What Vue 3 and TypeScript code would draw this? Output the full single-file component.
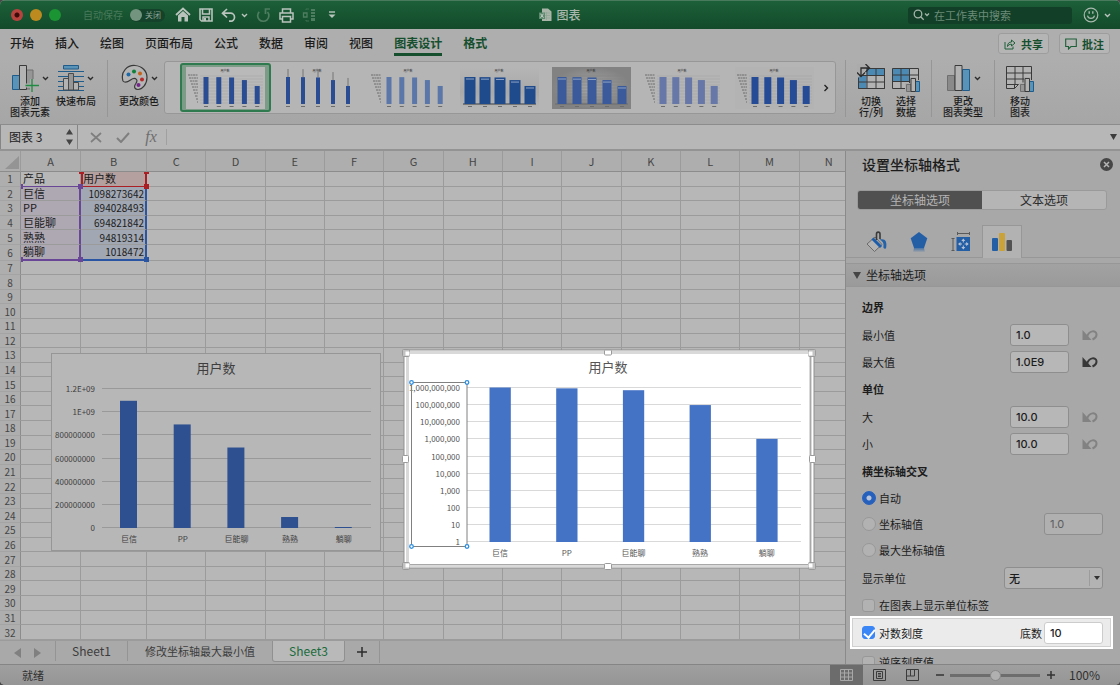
<script setup lang="ts">
import { ref } from 'vue'

interface Handle { pos: string; tone: string }
interface Series { label: string; value: number }
interface ThumbStyle { width: number; fill: string; bg: string; axis: boolean; grid: boolean; whiskers: boolean; caps: boolean }

const series: Series[] = [
  { label: '巨信', value: 1098273642 },
  { label: 'PP', value: 894028493 },
  { label: '巨能聊', value: 694821842 },
  { label: '熟熟', value: 94819314 },
  { label: '躺聊', value: 1018472 },
]

const ribbonTabs = ['开始', '插入', '绘图', '页面布局', '公式', '数据', '审阅', '视图', '图表设计', '格式']
const columns = 'ABCDEFGHIJKLMN'.split('')
const rowCount = 32

function cellText(row: number, col: number): string {
  if (row === 1) return col === 0 ? '产品' : col === 1 ? '用户数' : ''
  const item = series[row - 2]
  if (!item) return ''
  return col === 0 ? item.label : col === 1 ? String(item.value) : ''
}

function cellClass(row: number, col: number): string[] {
  const out: string[] = []
  if (row === 1 && col === 0) out.push('range-head')
  if (row === 1 && col === 1) out.push('range-red')
  if (row > 1 && row < 7 && col === 0) out.push('range-purple')
  if (row > 1 && row < 7 && col === 1) out.push('range-blue')
  if (row === 6 && col < 2) out.push('range-end')
  return out
}

const handles: Record<string, Handle[]> = {
  '1-0': [{ pos: 'bl', tone: 'purple' }],
  '1-1': [
    { pos: 'tl', tone: 'red' },
    { pos: 'tr', tone: 'red' },
    { pos: 'bl', tone: 'purple' },
    { pos: 'br', tone: 'red' },
  ],
  '6-0': [{ pos: 'bl', tone: 'purple' }],
  '6-1': [
    { pos: 'bl', tone: 'purple' },
    { pos: 'br', tone: 'blue' },
  ],
}

const linearTicks = ['1.2E+09', '1E+09', '800000000', '600000000', '400000000', '200000000', '0']
const logTicks = Array.from({ length: 10 }, (_, i) => (10 ** (9 - i)).toLocaleString('en-US'))

const linearHeight = (v: number) => Math.max(1, (v / 1.2e9) * 139)
const logHeight = (v: number, full: number) => (Math.min(Math.log10(v), 9) / 9) * full

const thumbs: ThumbStyle[] = [
  { width: 5, fill: '#2a4c92', bg: '#b9b9b9', axis: true, grid: true, whiskers: false, caps: false },
  { width: 4, fill: '#2a4c92', bg: '#b5b5b5', axis: false, grid: false, whiskers: true, caps: false },
  { width: 5, fill: '#5b76a8', bg: '#b5b5b5', axis: true, grid: false, whiskers: false, caps: false },
  { width: 11, fill: '#1f4a8c', bg: 'url(#shade)', axis: false, grid: false, whiskers: false, caps: true },
  { width: 9, fill: '#3a5a9c', bg: 'url(#metal)', axis: false, grid: true, whiskers: false, caps: true },
  { width: 7, fill: '#6677a8', bg: '#b5b5b5', axis: true, grid: true, whiskers: false, caps: false },
  { width: 7, fill: '#264b96', bg: '#b3b3b3', axis: true, grid: true, whiskers: false, caps: false },
]

function thumbX(t: ThumbStyle, i: number): number {
  return t.axis ? 20 + i * 12.8 : 10 + i * 15
}

const minValue = ref('1.0')
const maxValue = ref('1.0E9')
const major = ref('10.0')
const minor = ref('10.0')
const crossing = ref('auto')
const crossValue = ref('1.0')
const displayUnit = ref('none')
const showUnitLabel = ref(false)
const logScale = ref(true)
const logBase = ref('10')
const reversed = ref(false)
const zoomLevel = ref(50)
const autosave = ref(false)
const search = ref('')
const formula = ref('')
const nameBox = ref('图表 3')
</script>

<template>
  <div class="window">
    <header class="titlebar">
      <div class="title-left">
        <div class="lights">
          <button class="light red" aria-label="关闭窗口"></button>
          <button class="light amber" aria-label="最小化"></button>
          <button class="light green" aria-label="缩放"></button>
        </div>
        <label class="autosave">
          <span>自动保存</span>
          <input v-model="autosave" type="checkbox" />
          <span class="switch"><i></i>关闭</span>
        </label>
        <div class="quick">
          <button aria-label="主页">
            <svg width="16" height="16" viewBox="0 0 16 16"><path d="M1 8 8 1.5 15 8" fill="none" stroke="#b9c4bd" stroke-width="1.8" /><path d="M3 8.500 8 4l5 4.500V14.500H9.500V10h-3v4.500H3z" fill="#b9c4bd" /></svg>
          </button>
          <button aria-label="保存">
            <svg width="14" height="14" viewBox="0 0 14 14"><path d="M1 1h12v12H2.500L1 11.500z" fill="none" stroke="#b9c4bd" stroke-width="1.600" /><path d="M3.500 1v5h7V1M4 13V9h6v4" fill="none" stroke="#b9c4bd" stroke-width="1.500" /><path d="M5 10h2v3H5z" fill="#b9c4bd" /></svg>
          </button>
          <button class="pair" aria-label="撤销">
            <svg width="15" height="14" viewBox="0 0 15 14"><path d="M6 1 1.500 5.200 6 9.500M2 5.200h7.500a4 4 0 0 1 0 8H8" fill="none" stroke="#b9c4bd" stroke-width="1.700" /></svg>
            <svg width="7" height="5" viewBox="0 0 7 5"><path d="m1 1 2.500 2.500L6 1" fill="none" stroke="#b9c4bd" stroke-width="1.400" /></svg>
          </button>
          <button aria-label="恢复">
            <svg width="15" height="15" viewBox="0 0 15 15"><path d="M3.200 3.800A5.600 5.600 0 1 0 11.500 4" fill="none" stroke="#4f7d60" stroke-width="1.700" /><path d="M14 1H9.500v5" fill="none" stroke="#4f7d60" stroke-width="1.700" /></svg>
          </button>
          <button aria-label="打印">
            <svg width="15" height="15" viewBox="0 0 15 15"><path d="M3.500 5V1h8v4M3.500 11H1V5h13v6h-2.500M3.500 8.500h8V14h-8z" fill="none" stroke="#b9c4bd" stroke-width="1.500" /></svg>
          </button>
          <button aria-label="移动控件">
            <svg width="14" height="14" viewBox="0 0 14 14"><path d="M1.500 5h3.500v4H1.500z" fill="none" stroke="#4f7d60" stroke-width="1.300" /><path d="M4 2V1h3M4 12v1h3" fill="none" stroke="#3f7052" /><path d="M9 1h4v2H9zM9 4h4v2H9zM9 7h4v2H9zM9 10h4v3H9z" fill="#4f7d60" /></svg>
          </button>
          <button class="customize" aria-label="自定义工具栏">
            <svg width="8" height="8" viewBox="0 0 8 8"><path d="M1 1h6" stroke="#b9c4bd" stroke-width="1.400" /><path d="M.5 3.500h7L4 7z" fill="#b9c4bd" /></svg>
          </button>
        </div>
      </div>
      <h1 class="doc-title">
        <svg width="13" height="14" viewBox="0 0 13 14"><path d="M3 .5h6l3.500 3V13H3z" fill="#a9b5a9" /><path d="M5 5h6M5 7.500h6M5 10h6M7.500 4v8" stroke="#8ea392" stroke-width=".7" /><path d="M0 4.500h6v6.500H0z" fill="#5c8a6e" /><path d="m1.500 5.700 3 4M4.500 5.700l-3 4" stroke="#c5cec6" /></svg>
        图表
      </h1>
      <div class="title-right">
        <label class="search">
          <svg width="18" height="12" viewBox="0 0 18 12"><circle cx="5" cy="5" r="3.800" fill="none" stroke="#a3b5a9" stroke-width="1.300" /><path d="m7.700 7.700 3 3M12 4.500l2 2 2-2" fill="none" stroke="#a3b5a9" stroke-width="1.300" /></svg>
          <input v-model="search" type="text" placeholder="在工作表中搜索" aria-label="在工作表中搜索" />
        </label>
        <button class="smile" aria-label="反馈">
          <svg width="16" height="16" viewBox="0 0 16 16"><circle cx="8" cy="8" r="6.800" fill="none" stroke="#a9b8ae" stroke-width="1.200" /><path d="M4.500 8.700a3.600 3.600 0 0 0 7 0" fill="none" stroke="#a9b8ae" stroke-width="1.200" /><path d="M6.200 4.300v2.500M9.800 4.300v2.500" stroke="#a9b8ae" stroke-width="1.400" /></svg>
          <svg width="7" height="5" viewBox="0 0 7 5"><path d="m1 1 2.500 2.500L6 1" fill="none" stroke="#b9c4bd" stroke-width="1.400" /></svg>
        </button>
      </div>
    </header>

    <nav class="tabs">
      <button v-for="tab in ribbonTabs" :key="tab" :class="{ active: tab === '图表设计', context: tab === '格式' }">{{ tab }}</button>
      <div class="share">
        <button>
          <svg width="12" height="12" viewBox="0 0 12 12"><path d="M1 4v7h8V8.500" fill="none" stroke="#1d5f38" /><path d="M3.500 8.500c0-3 1.500-4.500 4-4.500V2L11 5 7.500 8V6.200c-2 0-3 .6-4 2.300z" fill="none" stroke="#1d5f38" /></svg>
          共享
        </button>
        <button>
          <svg width="12" height="12" viewBox="0 0 12 12"><path d="M.7 1h10.600v7.500H6L3.500 11V8.500H.7z" fill="none" stroke="#1d5f38" stroke-width="1.100" /></svg>
          批注
        </button>
      </div>
    </nav>

    <section class="ribbon">
      <button class="tool">
        <span class="pic">
          <svg width="28" height="28" viewBox="0 0 28 28"><path d="M15 6h7v19h-7z" fill="#969696" stroke="#6f6f6f" /><path d="M1.500 11.500h7v14h-7z" fill="#5a93b8" stroke="#1f5c8c" /><path d="M8.500 1.500h7v24h-7z" fill="#b3b3b3" stroke="#3a3a3a" /><path d="M21 15v13M14.500 21.500H28" stroke="#ababab" stroke-width="4" /><path d="M21 15v13M14.500 21.500H28" stroke="#218a43" stroke-width="1.300" /></svg>
          <svg class="chev" width="7" height="5" viewBox="0 0 7 5"><path d="m1 1 2.500 2.500L6 1" fill="none" stroke="#2c2c2c" stroke-width="1.400" /></svg>
        </span>
        <span>添加<br />图表元素</span>
      </button>
      <button class="tool second">
        <span class="pic">
          <svg width="26" height="28" viewBox="0 0 26 28"><path d="M5.500 1.500h15v3.500h-15z" fill="#5a93b8" stroke="#1f5c8c" /><path d="M0 7.500h26M0 12.500h26M0 17.500h26M0 22.500h26M0 26.500h26" stroke="#1f5c8c" stroke-width="1.200" /><path d="M5.500 14.500h5.500V26H5.500zM15.500 18.500h5V26h-5z" fill="#b3b3b3" stroke="#4a4a4a" /><path d="M10.500 9.500h5V26h-5z" fill="#969696" stroke="#4a4a4a" /></svg>
          <svg class="chev" width="7" height="5" viewBox="0 0 7 5"><path d="m1 1 2.500 2.500L6 1" fill="none" stroke="#2c2c2c" stroke-width="1.400" /></svg>
        </span>
        <span>快速布局</span>
      </button>
      <i class="sep"></i>
      <button class="tool">
        <span class="pic">
          <svg width="27" height="28" viewBox="0 0 27 28"><path d="M2 17C-1 7 7 1 14 1.500c7 .5 12 5.500 12 12 0 7-5 12-9 12-3 0-4-2-3-4.500 1-2 3-3.500 1.500-5.500-2-2.500-4-1-6 .5S4 19.500 2 17z" fill="#b5b5b5" stroke="#3a3a3a" stroke-width="1.200" /><circle cx="7.500" cy="10.500" r="2" fill="#1c6aa8" /><circle cx="13" cy="7.500" r="2" fill="#11803a" /><circle cx="19" cy="9.500" r="2" fill="#c4641c" /><circle cx="21" cy="15.500" r="2" fill="#b82a2a" /><circle cx="17.500" cy="21" r="2" fill="#74268c" /></svg>
          <svg class="chev" width="7" height="5" viewBox="0 0 7 5"><path d="m1 1 2.500 2.500L6 1" fill="none" stroke="#2c2c2c" stroke-width="1.400" /></svg>
        </span>
        <span>更改颜色</span>
      </button>
      <div class="gallery">
        <button v-for="(t, n) in thumbs" :key="n" class="thumb" :class="{ selected: n === 0 }" :aria-label="'样式 ' + (n + 1)">
          <svg width="79" height="42" viewBox="0 0 79 42">
            <defs>
              <linearGradient id="shade" x1="0" y1="0" x2="0" y2="1"><stop offset="0" stop-color="#b5b5b5" /><stop offset=".6" stop-color="#a9a9a9" /><stop offset="1" stop-color="#b5b5b5" /></linearGradient>
              <radialGradient id="metal"><stop offset="0" stop-color="#a6a6a6" /><stop offset="1" stop-color="#828282" /></radialGradient>
            </defs>
            <rect width="79" height="42" :fill="t.bg" />
            <template v-if="t.grid"><path v-for="g in 10" :key="g" :d="`M${t.axis ? 14 : 3} ${6 + g * 3}H77`" :stroke="n === 4 ? '#858585' : '#a6a6a6'" stroke-width=".6" /></template>
            <template v-if="t.axis"><path v-for="g in 10" :key="g" :d="`M${1 + g} ${5 + g * 3}H12`" stroke="#6c6c6c" stroke-width="1" stroke-dasharray="2 .5" /></template>
            <path v-if="n === 3 || n === 4" d="M3 37h73" stroke="#777" stroke-width="2" />
            <g v-for="(s, i) in series" :key="i">
              <path v-if="t.whiskers" :d="`M${thumbX(t, i)} ${29 - logHeight(s.value, 27)}v8`" stroke="#666" stroke-width=".8" />
              <rect :x="thumbX(t, i) - t.width / 2" :y="37 - logHeight(s.value, 27)" :width="t.width" :height="logHeight(s.value, 27)" :fill="t.fill" />
              <path v-if="t.caps" :d="`M${thumbX(t, i) - 4} ${39 - logHeight(s.value, 27)}h8`" stroke="#8fa3c4" stroke-width="1" />
              <path :d="`M${thumbX(t, i) - 2} 39.500h4`" stroke="#6c6c6c" stroke-width="1" />
            </g>
            <text x="39" y="5" text-anchor="middle" font-size="3" fill="#333">用户数</text>
          </svg>
        </button>
        <button class="more" aria-label="更多样式">
          <svg width="6" height="8" viewBox="0 0 6 8"><path d="m1.500 1 3 3-3 3" fill="none" stroke="#222" stroke-width="1.400" /></svg>
        </button>
      </div>
      <i class="sep"></i>
      <button class="tool narrow">
        <span class="pic">
          <svg width="28" height="28" viewBox="0 0 28 28"><path d="M1.500 4.500h26v20h-26z" fill="#b3b3b3" stroke="#3a3a3a" /><path d="M9.500 4.500h18v7H9.500zM1.500 11.500h8v13h-8z" fill="#4d8ab3" /><path d="M1.500 11.500h26M1.500 18h26M10 4.500v20M19 4.500v20M1.500 4.500h26v20h-26z" fill="none" stroke="#3a3a3a" /><path d="M-1-1h15L1 14h-3z" fill="#ababab" /><path d="M4 12V4h8M8.500 0 12.500 4l-4 4M0 8.500l4 4 4-4" fill="none" stroke="#2c2c2c" stroke-width="1.300" /></svg>
        </span>
        <span>切换<br />行/列</span>
      </button>
      <button class="tool narrow third">
        <span class="pic">
          <svg width="28" height="28" viewBox="0 0 28 28"><path d="M.5 4.500h26v20H.500z" fill="#b3b3b3" /><path d="M.5 4.500H18v13H.500z" fill="#4d8ab3" /><path d="M.5 4.500h26v20H.500zM.5 11h26M.5 17.500h26M9 4.500v20M17.500 4.500v20" fill="none" stroke="#3a3a3a" /><path d="M13 19h5v-6h7v3h3v12H13z" fill="#ababab" /><path d="M14.500 20.500h4.500v7h-4.500z" fill="#969696" stroke="#6f6f6f" /><path d="M23.500 17.500h4v10h-4z" fill="#5a93b8" stroke="#1f5c8c" /><path d="M19 14.500h4.500v13H19z" fill="#b3b3b3" stroke="#3a3a3a" /></svg>
        </span>
        <span>选择<br />数据</span>
      </button>
      <i class="sep"></i>
      <button class="tool">
        <span class="pic">
          <svg width="25" height="28" viewBox="0 0 25 28"><path d="M1.500 11.500h7v15h-7z" fill="#8a8a8a" stroke="#6f6f6f" /><path d="M16.500 5.500h7v21h-7z" fill="#5a93b8" stroke="#1f5c8c" /><path d="M9 1.500h7v25H9z" fill="#b3b3b3" stroke="#3a3a3a" /></svg>
          <svg class="chev" width="7" height="5" viewBox="0 0 7 5"><path d="m1 1 2.500 2.500L6 1" fill="none" stroke="#2c2c2c" stroke-width="1.400" /></svg>
        </span>
        <span>更改<br />图表类型</span>
      </button>
      <i class="sep"></i>
      <button class="tool narrow last">
        <span class="pic">
          <svg width="28" height="28" viewBox="0 0 28 28"><path d="M.5 2.500h25v20H12l-4 2H.500z" fill="#b3b3b3" /><path d="M25.500 16V2.500H.500v22h8l4-4H.500M.500 9h25M.500 15h25M9 2.500v18M17 2.500v16M8.500 24.500v-4" fill="none" stroke="#3a3a3a" /><path d="M13 19h5v-6h7v3h3v12H13z" fill="#ababab" /><path d="M14.500 20.500h4.500v7h-4.500z" fill="#969696" stroke="#6f6f6f" /><path d="M23.500 17.500h4v10h-4z" fill="#5a93b8" stroke="#1f5c8c" /><path d="M19 14.500h4.500v13H19z" fill="#b3b3b3" stroke="#3a3a3a" /></svg>
        </span>
        <span>移动<br />图表</span>
      </button>
    </section>

    <section class="formula">
      <div class="namebox">
        <input v-model="nameBox" type="text" aria-label="名称框" />
        <svg width="7" height="16" viewBox="0 0 7 16"><path d="M3.500 0 7 5.500H0zM3.500 16 0 10.500h7z" fill="#444" /></svg>
      </div>
      <button aria-label="取消"><svg width="12" height="11" viewBox="0 0 12 11"><path d="m1 1 10 9M11 1 1 10" stroke="#7f7f7f" stroke-width="1.700" /></svg></button>
      <button aria-label="输入"><svg width="14" height="11" viewBox="0 0 14 11"><path d="m1 6 4 4 8-9" fill="none" stroke="#7f7f7f" stroke-width="2" /></svg></button>
      <button class="fx" aria-label="插入函数">fx</button>
      <input v-model="formula" class="formula-input" type="text" aria-label="编辑栏" />
      <svg class="expand" width="7" height="6" viewBox="0 0 7 6"><path d="M0 0h7L3.500 6z" fill="#3c3c3c" /></svg>
    </section>

    <main class="main">
      <div class="workbook">
        <div class="sheet">
          <table>
            <colgroup>
              <col class="c-row" />
              <col class="c-a" />
              <col class="c-b" />
              <col v-for="n in 12" :key="n" />
            </colgroup>
            <thead>
              <tr>
                <th class="corner"><svg width="14" height="13" viewBox="0 0 14 13"><path d="M14 0v13H0z" fill="#949494" /></svg></th>
                <th v-for="c in columns" :key="c" scope="col">{{ c }}</th>
              </tr>
            </thead>
            <tbody>
              <tr v-for="r in rowCount" :key="r">
                <th scope="row">{{ r }}</th>
                <td v-for="(c, i) in columns" :key="c" :class="cellClass(r, i)">
                  {{ cellText(r, i) }}<i v-for="h in handles[r + '-' + i] || []" :key="h.pos" class="handle" :class="[h.pos, h.tone]"></i>
                </td>
              </tr>
            </tbody>
          </table>

          <svg class="chart linear" width="330" height="198" viewBox="0 0 330 198" role="img" aria-label="用户数">
            <rect x=".5" y=".5" width="329" height="197" fill="#b7b7b7" stroke="#969696" />
            <text x="165" y="20" class="chart-title">用户数</text>
            <g v-for="(t, i) in linearTicks" :key="t">
              <path :d="`M51 ${35.5 + Math.round(i * 23.2)}H320`" stroke="#999" />
              <text x="44" :y="39 + Math.round(i * 23.2)" class="tick">{{ t }}</text>
            </g>
            <g v-for="(s, i) in series" :key="s.label">
              <rect :x="69 + i * 53.7" :y="175 - linearHeight(s.value)" width="17" :height="linearHeight(s.value)" fill="#2e5090" />
              <text :x="78 + i * 53.7" y="189" class="cat">{{ s.label }}</text>
            </g>
          </svg>

          <svg class="chart log" width="412" height="221" viewBox="0 0 412 221" role="img" aria-label="用户数">
            <rect x="1" y="1" width="410" height="218" rx="3" fill="#fff" stroke="#8f8f8f" />
            <rect x="4.500" y="3.500" width="403" height="213" fill="#fff" stroke="#d9d9d9" stroke-width="3" />
            <path d="M5 215.500h402.500V5" fill="none" stroke="#a8a8a8" />
            <g fill="#fff" stroke="#9a9a9a">
              <rect x="-.5" y=".5" width="7" height="7" rx="1" fill="#c2c2c2" />
              <rect x="405.500" y=".5" width="7" height="7" rx="1" fill="#c2c2c2" />
              <rect x="-.5" y="213.500" width="7" height="7" rx="1" fill="#c2c2c2" />
              <rect x="405.500" y="213.500" width="7" height="7" rx="1" fill="#c2c2c2" />
              <rect x="201.500" y="1" width="7" height="5" rx="1" />
              <rect x="201.500" y="214.500" width="7" height="6" rx="1" />
              <rect x="-.5" y="106.500" width="6" height="7" rx="1" />
              <rect x="406.500" y="106.500" width="6" height="7" rx="1" />
            </g>
            <path d="M2.500 2.500h4v4h-4zM405.500 2.500h4v4h-4zM2.500 214.500h4v4h-4zM405.500 214.500h4v4h-4z" fill="#fff" />
            <text x="205" y="23" class="chart-title bright">用户数</text>
            <g v-for="(t, i) in logTicks" :key="t">
              <path :d="`M64 ${38.5 + Math.round(i * 17.15)}H398`" stroke="#d9d9d9" />
              <text x="57" :y="42 + Math.round(i * 17.15)" class="tick bright">{{ t }}</text>
            </g>
            <g v-for="(s, i) in series" :key="s.label">
              <rect :x="86.5 + i * 66.7" :y="193 - logHeight(s.value, 154.5)" width="21.300" :height="logHeight(s.value, 154.5)" fill="#4472c4" />
              <text :x="97 + i * 66.7" y="207" class="cat bright">{{ s.label }}</text>
            </g>
            <path d="M8.500 33.500H64v164H8.500z" fill="none" stroke="#808080" />
            <g fill="#fff" stroke="#2f8fe0" stroke-width="1.300">
              <circle cx="8.500" cy="33.500" r="1.800" /><circle cx="64" cy="33.500" r="1.800" />
              <circle cx="8.500" cy="197.500" r="1.800" /><circle cx="64" cy="197.500" r="1.800" />
            </g>
          </svg>
        </div>

        <div class="sheet-tabs">
          <button class="arrow" aria-label="上一个"><svg width="7" height="10" viewBox="0 0 7 10"><path d="M7 0v10L0 5z" fill="#808080" /></svg></button>
          <button class="arrow" aria-label="下一个"><svg width="7" height="10" viewBox="0 0 7 10"><path d="M0 0v10l7-5z" fill="#808080" /></svg></button>
          <button class="stab first">Sheet1</button>
          <button class="stab wide">修改坐标轴最大最小值</button>
          <button class="stab current">Sheet3</button>
          <button class="add" aria-label="新建工作表"><svg width="10" height="10" viewBox="0 0 10 10"><path d="M5 0v10M0 5h10" stroke="#2c2c2c" stroke-width="1.500" /></svg></button>
        </div>
      </div>

      <aside class="panel">
        <div class="panel-head">
          <h2>设置坐标轴格式</h2>
          <button aria-label="关闭"><svg width="13" height="13" viewBox="0 0 13 13"><circle cx="6.500" cy="6.500" r="6.500" fill="#464646" /><path d="m4 4 5 5M9 4 4 9" stroke="#b5b5b5" stroke-width="1.500" /></svg></button>
        </div>
        <div class="segment">
          <button class="on">坐标轴选项</button>
          <button>文本选项</button>
        </div>
        <div class="kinds">
          <button aria-label="填充与线条">
            <svg width="22" height="22" viewBox="0 0 22 22"><path d="m9 6 7 7.500-7.500 7-7.500-7.500z" fill="#b3b3b3" stroke="#6a6a6a" /><path d="m6.500 7.500 8.500 8.500" stroke="#1c5ca8" stroke-width="3" /><path d="M13.500 8.500c5.500-1.500 8 1.500 6.500 9-2 .5-3-.5-2.500-2.500.5-3-1-5-4-6.500z" fill="#2463a8" /><path d="M10.500 9V3c0-2.500 3.500-2.500 3.500 0v5" fill="none" stroke="#3a3a3a" stroke-width="1.600" /></svg>
          </button>
          <button aria-label="效果">
            <svg width="18" height="22" viewBox="0 0 18 22"><defs><linearGradient id="fade" x1="0" y1="0" x2="0" y2="1"><stop offset="0" stop-color="#245fa6" stop-opacity=".7" /><stop offset="1" stop-color="#245fa6" stop-opacity="0" /></linearGradient></defs><path d="m9 1 8.300 6.300L14 17H4L.700 7.300z" fill="#245fa6" /><path d="M4 17h10l1 4.500H3z" fill="url(#fade)" /></svg>
          </button>
          <button aria-label="大小与属性">
            <svg width="20" height="20" viewBox="0 0 20 20"><path d="M6 1.500h13M6.500 0v3M18.500 0v3M2 6v13M.5 6.500h3M.5 18.500h3" stroke="#5a5a5a" /><path d="M5.500 5H19v14H5.500z" fill="#245fa6" /><path d="m12.300 6.500 2 2.500h-4zM12.300 17.500l2-2.500h-4zM7 12l2.500 2v-4zM17.700 12l-2.500 2v-4z" fill="#b9c4d4" /><path d="M12.300 8v2.500M12.300 13.500V16M8.500 12h2.500M13.700 12h2.500" stroke="#b9c4d4" /></svg>
          </button>
          <button class="on" aria-label="坐标轴选项">
            <svg width="20" height="18" viewBox="0 0 20 18"><rect y="5" width="6" height="13" rx="1" fill="#245fa6" /><rect x="7" width="6" height="18" rx="1" fill="#c9a23a" /><rect x="14.500" y="7" width="5.500" height="11" rx="1" fill="#525252" /></svg>
          </button>
        </div>
        <h3 class="section"><svg width="8" height="7" viewBox="0 0 8 7"><path d="M0 0h8L4 7z" fill="#444" /></svg>坐标轴选项</h3>

        <form class="fields" @submit.prevent>
          <h4>边界</h4>
          <div class="row">
            <label for="f-min">最小值</label><input id="f-min" v-model="minValue" type="text" />
            <button class="reset" type="button" aria-label="重置最小值"><svg width="16" height="12" viewBox="0 0 16 12"><path d="M.5 1v10h9z" /><path d="M5 8c2-7 9-7 9.500-3 .3 3-2 4.500-4 5.500" /></svg></button>
          </div>
          <div class="row">
            <label for="f-max">最大值</label><input id="f-max" v-model="maxValue" type="text" />
            <button class="reset live" type="button" aria-label="重置最大值"><svg width="16" height="12" viewBox="0 0 16 12"><path d="M.5 1v10h9z" /><path d="M5 8c2-7 9-7 9.500-3 .3 3-2 4.500-4 5.500" /></svg></button>
          </div>
          <h4>单位</h4>
          <div class="row">
            <label for="f-major">大</label><input id="f-major" v-model="major" type="text" />
            <button class="reset" type="button" aria-label="重置主要单位"><svg width="16" height="12" viewBox="0 0 16 12"><path d="M.5 1v10h9z" /><path d="M5 8c2-7 9-7 9.500-3 .3 3-2 4.500-4 5.500" /></svg></button>
          </div>
          <div class="row">
            <label for="f-minor">小</label><input id="f-minor" v-model="minor" type="text" />
            <button class="reset" type="button" aria-label="重置次要单位"><svg width="16" height="12" viewBox="0 0 16 12"><path d="M.5 1v10h9z" /><path d="M5 8c2-7 9-7 9.500-3 .3 3-2 4.500-4 5.500" /></svg></button>
          </div>
          <h4>横坐标轴交叉</h4>
          <div class="row opt"><label><input v-model="crossing" type="radio" value="auto" />自动</label></div>
          <div class="row opt">
            <label><input v-model="crossing" type="radio" value="value" />坐标轴值</label>
            <input v-model="crossValue" type="text" disabled aria-label="坐标轴值" />
          </div>
          <div class="row opt"><label><input v-model="crossing" type="radio" value="max" />最大坐标轴值</label></div>
          <div class="row unit">
            <label for="f-unit">显示单位</label>
            <select id="f-unit" v-model="displayUnit"><option value="none">无</option></select>
          </div>
          <div class="row opt"><label><input v-model="showUnitLabel" type="checkbox" />在图表上显示单位标签</label></div>
          <div class="row spotlight">
            <label><input v-model="logScale" type="checkbox" />对数刻度</label>
            <label class="base" for="f-base">底数</label><input id="f-base" v-model="logBase" type="text" />
          </div>
          <div class="row opt"><label><input v-model="reversed" type="checkbox" />逆序刻度值</label></div>
        </form>
      </aside>
    </main>

    <footer class="status">
      <span>就绪</span>
      <div class="status-right">
        <button class="view on" aria-label="普通"><svg width="13" height="12" viewBox="0 0 13 12"><path d="M.5.500h12v11H.500zM.5 4h12M.5 8h12M4.500.500v11M8.500.500v11" fill="none" stroke="#a8a8a8" /></svg></button>
        <button class="view" aria-label="页面布局"><svg width="13" height="12" viewBox="0 0 13 12"><path d="M.5.500h12v11H.500z" fill="none" stroke="#3c3c3c" /><path d="M3.500 2.500h6v7h-6zM5 4.500h3M5 6h3M5 7.500h3" fill="none" stroke="#3c3c3c" /></svg></button>
        <button class="view" aria-label="分页预览"><svg width="13" height="12" viewBox="0 0 13 12"><path d="M.5.500h12v11H.500zM4.500.500V7H.500M4.500 7h4V.500" fill="none" stroke="#3c3c3c" /></svg></button>
        <button class="step" aria-label="缩小"><svg width="8" height="8" viewBox="0 0 8 8"><path d="M0 4h8" stroke="#333" stroke-width="1.500" /></svg></button>
        <input v-model="zoomLevel" type="range" min="0" max="100" aria-label="缩放" />
        <button class="step" aria-label="放大"><svg width="8" height="8" viewBox="0 0 8 8"><path d="M0 4h8M4 0v8" stroke="#333" stroke-width="1.500" /></svg></button>
        <span class="percent">100%</span>
      </div>
    </footer>
  </div>
</template>

<style>
body { background: #4a4a4a; }
</style>

<style scoped>
* { box-sizing: border-box; }
.window {
  display: flex; flex-direction: column; height: 100vh; overflow: hidden; border-radius: 5px;
  background: #ababab; color: #1c1c1c;
  font-family: "Noto Sans CJK SC", "Noto Sans", sans-serif; font-size: 11px; line-height: 16px;
}
button, input, select { font: inherit; color: inherit; }
button { display: flex; align-items: center; justify-content: center; padding: 0; border: 0; background: none; }
input[type="text"] { min-width: 0; outline: 0; }
svg { flex: none; display: block; }
h1, h2, h3, h4 { margin: 0; font-weight: 500; }

.titlebar {
  display: grid; grid-template-columns: 1fr auto 1fr; align-items: center; height: 29px; flex: none;
  border-top: 1px solid #4a7a5e; background: linear-gradient(#1c6039, #134a2a); color: #a9b8ae;
}
.title-left, .title-right, .lights, .quick, .autosave, .search { display: flex; align-items: center; }
.title-left { padding-left: 11px; }
.lights { gap: 7px; }
.light { width: 12px; height: 12px; border-radius: 50%; }
.light.red { background: radial-gradient(circle, #3c0c0a 2px, #b8423e 3px); }
.light.amber { background: #bd8a20; }
.light.green { background: #1b9433; }
.autosave { margin-left: 22px; font-size: 10px; color: #47795a; gap: 7px; position: relative; }
.autosave input { position: absolute; opacity: 0; margin: 0; }
.switch { display: flex; align-items: center; gap: 3px; width: 35px; height: 13px; border-radius: 7px; background: #14422a; font-size: 8px; color: #8fa297; }
.switch i { width: 12px; height: 12px; border-radius: 50%; background: #73957f; }
.quick { margin-left: 10px; gap: 8px; }
.pair { gap: 5px; }
.customize { margin-left: 4px; }
.doc-title { display: flex; align-items: center; gap: 4px; font-size: 12px; }
.title-right { justify-content: flex-end; padding-right: 9px; }
.search { width: 164px; height: 17px; padding: 0 5px; gap: 3px; border-radius: 3px; background: #123f27; }
.search input { flex: 1; padding: 0; border: 0; background: none; height: 16px; }
.search input::placeholder { color: #6b8b78; opacity: 1; }
.smile { margin-left: 11px; gap: 5px; }

.tabs { display: flex; gap: 21px; height: 29px; padding: 0 10px; flex: none; align-items: center; background: #aeaeae; }
.tabs > button { height: 25px; padding-top: 2px; border-bottom: 3px solid transparent; font-size: 12px; font-weight: 500; }
.tabs > .active, .tabs > .context { color: #164f2e; font-weight: 700; }
.tabs > .active { border-color: #164f2e; }
.share { display: flex; gap: 10px; margin-left: auto; }
.share button { gap: 5px; width: 51px; height: 21px; border: 1px solid #9d9d9d; border-radius: 3px; background: #b5b5b5; color: #164f2e; font-weight: 700; }

.ribbon { display: flex; align-items: flex-start; height: 67px; padding: 2px 86px 0 10px; flex: none; background: linear-gradient(#aeaeae, #a6a6a6); border-bottom: 1px solid #8c8c8c; }
.tool { display: flex; flex-direction: column; width: 40px; padding-top: 4px; font-size: 10px; font-weight: 500; line-height: 11px; gap: 3px; white-space: nowrap; }
.pic { display: flex; align-items: center; gap: 3px; }
.second { margin-left: 6px; }
.narrow { width: 28px; }
.third { margin-left: 7px; }
.sep { width: 1px; height: 57px; margin: 0 11px; background: #969696; }
.gallery { display: flex; flex: 1; min-width: 0; height: 53px; margin-left: 5px; padding: 0 2px 0 15px; border: 1px solid #979797; border-radius: 3px; background: #b5b5b5; margin-top: 1px; }
.gallery + .sep { margin-left: 9px; }
.thumb { flex: 1; min-width: 0; margin-top: 1px; height: 49px; border: 2px solid transparent; border-radius: 3px; }
.thumb.selected { background: #7c9c87; border-color: #2f7a4e; }
.more { width: 13px; }

.formula { display: flex; align-items: center; height: 26px; flex: none; background: #b7b7b7; border-bottom: 2px solid #939393; }
.namebox { display: flex; align-items: center; width: 78px; height: 24px; padding: 0 4px 0 8px; border-right: 1px solid #858585; border-left: 1px solid #858585; }
.namebox input { flex: 1; padding: 0; border: 0; background: none; font-size: 12px; }
.formula > button { width: 27px; }
.formula > button:first-of-type { margin-left: 4px; }
.formula .fx { width: 30px; font-family: "Liberation Serif", serif; font-style: italic; font-size: 16px; color: #6e6e6e; }
.formula-input { flex: 1; height: 16px; border: 0; border-left: 1px solid #a0a0a0; background: none; padding: 0 4px; }
.expand { margin-right: 3px; }

.main { display: flex; flex: 1; min-height: 0; }
.workbook { display: flex; flex-direction: column; flex: 1; min-width: 0; }
.sheet { position: relative; flex: 1; min-height: 0; overflow: hidden; background: #b7b7b7; }
table { width: calc(100% + 14px); height: 100%; table-layout: fixed; border-spacing: 0; border-collapse: separate; }
.c-row { width: 21px; }
.c-a { width: 60px; }
.c-b { width: 66px; }
th, td { padding: 0; line-height: 11px; font-weight: 400; border-right: 1px solid #9b9b9b; border-bottom: 1px solid #9b9b9b; white-space: nowrap; }
thead th { height: 21px; color: #454545; background: #aeaeae; border-bottom-color: #8c8c8c; }
.corner svg { margin: 3px 0 0 5px; }
tbody th { font-size: 10px; color: #454545; background: #aeaeae; border-right-color: #8c8c8c; border-bottom-color: #a4a4a4; }
td { position: relative; padding: 0 2px; }
.range-head { border-bottom: 1px solid #6a4696; }
.range-purple { background: #aea8b3; border-right: 2px solid #6a4696; }
.range-red { background: #b5a0a0; border-right: 2px solid #ab1f24; border-bottom-color: #ab1f24; box-shadow: inset 2px 0 #ab1f24; }
.range-blue { background: #a2a8b3; border-right: 2px solid #2a55a3; padding-right: 1px; text-align: right; font-size: 10px; }
.range-end { border-bottom: 2px solid #2a55a3; }
.range-purple.range-end { border-bottom-color: #6a4696; }
.handle { position: absolute; width: 5px; height: 5px; z-index: 1; }
.handle.tl { left: -2px; top: 0; height: 2px; }
.handle.tr { right: -4px; top: 0; height: 2px; }
.handle.bl { left: -3px; bottom: -3px; }
.handle.br { right: -4px; bottom: -3px; }
.range-head .handle, .range-purple .handle { left: 0; width: 2px; }
.handle.purple { background: #6a4696; }
.handle.red { background: #ab1f24; }
.handle.blue { background: #2a55a3; }

.chart { position: absolute; overflow: visible; z-index: 2; }
.linear { left: 51px; top: 202px; }
.log { left: 403px; top: 198px; }
.chart-title { font-size: 13px; text-anchor: middle; fill: #3e3e3e; }
.tick { font-size: 8px; text-anchor: end; fill: #3e3e3e; }
.cat { font-size: 8px; text-anchor: middle; fill: #3e3e3e; }
.bright { fill: #555; }

.sheet-tabs { display: flex; height: 24px; flex: none; align-items: flex-start; background: #a9a9a9; border-top: 1px solid #9b9b9b; color: #3c3c3c; }
.arrow { width: 20px; height: 23px; }
.arrow:first-child { margin-left: 7px; }
.arrow + .stab { margin-left: 8px; }
.stab { height: 20px; border-left: 1px solid #949494; }
.first { width: 72px; font-size: 12px; }
.wide { width: 145px; }
.current { width: 73px; height: 21px; font-size: 12px; color: #1a6b3c; background: #b9b9b9; border: 1px solid #909090; border-top: 0; border-radius: 0 0 3px 3px; }
.add { width: 35px; height: 22px; border-right: 1px solid #949494; }

.panel { display: flex; flex-direction: column; width: 275px; flex: none; overflow: hidden; background: #a8a8a8; border-left: 1px solid #8a8a8a; }
.panel-head { display: flex; align-items: center; justify-content: space-between; height: 26px; padding: 0 7px 0 16px; flex: none; }
.panel-head h2 { font-size: 14px; }
.segment { display: flex; margin: 13px 13px 0 11px; height: 20px; flex: none; border: 1px solid #9a9a9a; border-radius: 3px; overflow: hidden; background: #b5b5b5; }
.segment button { flex: 1; font-size: 12px; color: #2c2c2c; }
.segment .on { background: #505050; color: #b5b5b5; }
.kinds { display: flex; height: 48px; padding: 15px 0 0 10px; flex: none; border-bottom: 1px solid #979797; }
.kinds button { width: 42px; height: 33px; }
.kinds .on { width: 40px; border: 1px solid #979797; border-bottom: 0; background: #b2b2b2; }
.section { display: flex; align-items: center; gap: 5px; height: 24px; margin-top: 5px; padding-left: 7px; flex: none; font-size: 12px; font-weight: 400; border: 1px solid #979797; border-width: 1px 0; background: linear-gradient(#a2a2a2, #9a9a9a); }
.fields { padding-top: 6px; }
.fields h4 { height: 28px; padding-left: 16px; line-height: 28px; font-weight: 700; }
.row { display: flex; align-items: center; height: 27px; padding: 0 17px 0 16px; }
.row label { flex: 1; display: flex; align-items: center; }
.row input[type="text"] { width: 59px; height: 22px; padding: 0 5px; border: 1px solid #8e8e8e; border-radius: 3px; background: #b7b7b7; font-family: Inter, sans-serif; font-size: 11px; font-weight: 500; }
.row input[type="text"]:disabled { color: #5e5e5e; font-weight: 400; background: #b0b0b0; }
.reset { width: 16px; margin: 0 5px 0 13px; }
.reset svg path:first-child { fill: #828282; }
.reset svg path:last-child { fill: none; stroke: #828282; stroke-width: 2; }
.reset.live svg path:first-child { fill: #383838; }
.reset.live svg path:last-child { stroke: #383838; }
.opt { height: 26px; }
.row input[type="radio"], .row input[type="checkbox"] { appearance: none; flex: none; margin: 0 4px 0 0; width: 13px; height: 13px; background: #b2b2b2; border: 1px solid #989898; border-radius: 3px; }
.row input[type="radio"] { width: 14px; height: 14px; border-radius: 50%; margin: 0 3px 0 0; }
.row input[type="radio"]:checked { border-color: #2560bd; background: radial-gradient(circle, #b9c4d8 2px, #2560bd 3px); }
.unit { position: relative; height: 29px; }
.unit select { width: 99px; height: 22px; padding: 0 4px; appearance: none; border: 1px solid #8e8e8e; border-radius: 3px; background: linear-gradient(#9c9c9c, #9c9c9c) calc(100% - 12px) 50% / 1px 16px no-repeat #b3b3b3; font-weight: 500; }
.unit::after { content: ""; position: absolute; right: 20px; top: 13px; border: 3px solid transparent; border-top: 4px solid #333; border-bottom: 0; pointer-events: none; }
.spotlight { height: 33px; margin: -2px 7px 0 4px; padding: 0 8px 0 10px; border: 2px solid #fff; background: #ebebeb; box-shadow: inset 0 0 0 1px #d0d0d0; }
.row.spotlight input[type="checkbox"] { border-color: #3b86f7; background: #3b86f7; position: relative; }
.spotlight input[type="checkbox"]:checked::after { content: ""; position: absolute; left: 3px; top: 0; width: 5px; height: 9px; border: solid #fff; border-width: 0 2px 2px 0; transform: rotate(40deg); }
.row.spotlight input[type="text"] { background: #fff; border-color: #ccc; }
.row .base { flex: none; margin-right: 2px; }

.status { display: flex; align-items: center; justify-content: space-between; height: 21px; flex: none; padding-left: 22px; border-top: 1px solid #858585; background: linear-gradient(#9f9f9f, #959595); color: #303030; }
.status-right { display: flex; align-items: center; height: 20px; }
.view { width: 33px; height: 20px; }
.view.on { background: #6c6c6c; }
.step { width: 21px; height: 20px; }
.status input { appearance: none; width: 90px; height: 13px; margin: 0; background: linear-gradient(#6d6d6d, #6d6d6d) 0 50% / 100% 3px no-repeat; }
.status input::-webkit-slider-thumb { appearance: none; width: 11px; height: 11px; border-radius: 50%; background: #b0b0b0; border: 1px solid #888; }
.percent { width: 59px; padding-left: 8px; font-size: 12px; }
</style>
